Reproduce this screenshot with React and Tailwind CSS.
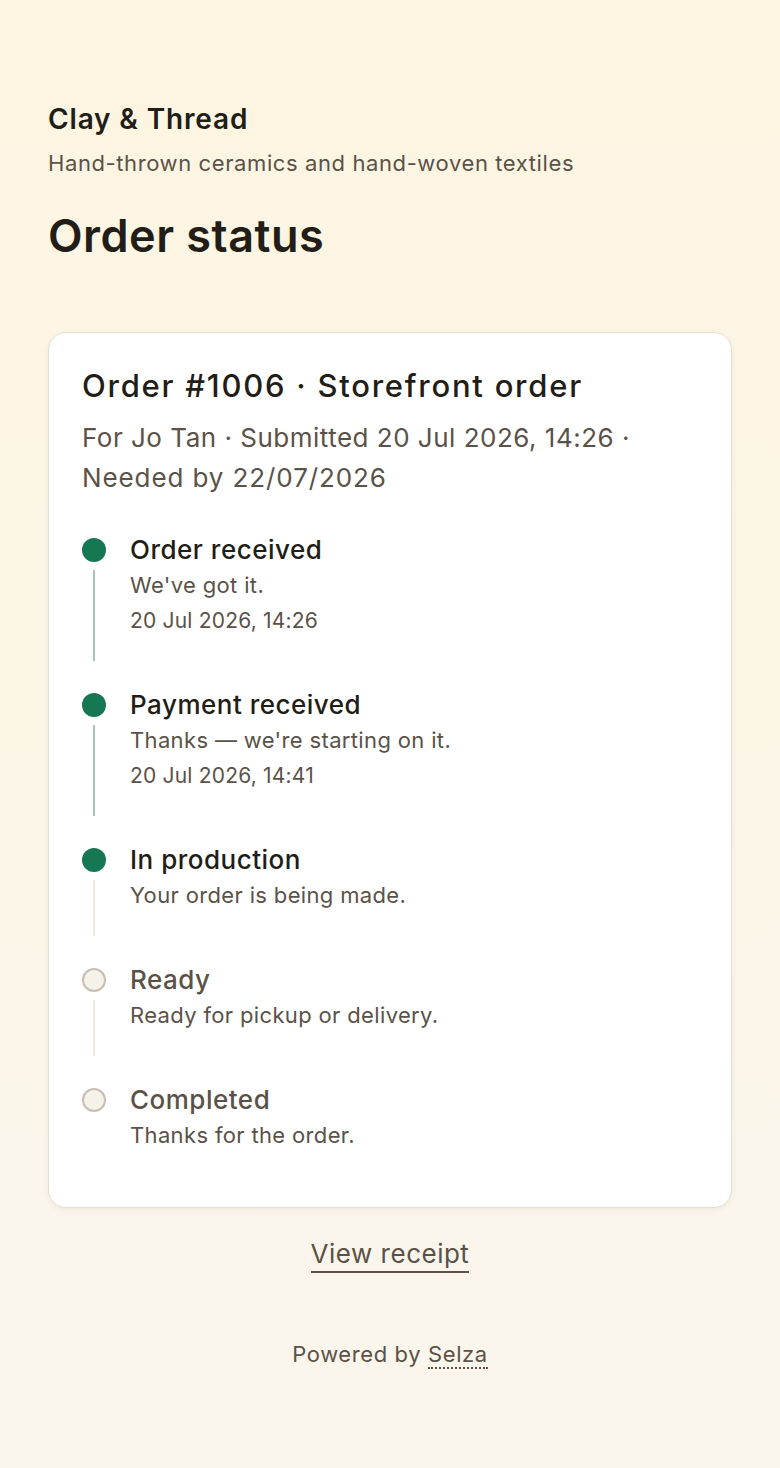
import React from "react";

const steps = [
  { title: "Order received", desc: "We've got it.", date: "20 Jul 2026, 14:26", done: true, lineDone: true },
  { title: "Payment received", desc: "Thanks — we're starting on it.", date: "20 Jul 2026, 14:41", done: true, lineDone: true },
  { title: "In production", desc: "Your order is being made.", done: true, lineDone: false },
  { title: "Ready", desc: "Ready for pickup or delivery.", done: false, lineDone: false },
  { title: "Completed", desc: "Thanks for the order.", done: false, last: true },
];

export default function App() {
  return (
    <div
      className="min-h-[1468px] w-full bg-gradient-to-b from-[#fdf5e1] to-[#faf6ed] text-[#221d16]"
      style={{ fontFamily: "Inter, 'Liberation Sans', sans-serif" }}
    >
      <div className="px-[48px] pt-[101px]">
        <div className="text-[28px] font-semibold leading-[36px] tracking-[0.85px]">Clay &amp; Thread</div>
        <div className="mt-[11px] text-[22px] leading-[30px] tracking-[0.6px] text-[#5a5248]">
          Hand-thrown ceramics and hand-woven textiles
        </div>
        <h1 className="mt-[32px] text-[45px] font-semibold leading-[52px] tracking-[0.5px]">Order status</h1>

        <div className="mt-[70px] rounded-[18px] border border-[#e6dfd2] bg-white px-[33px] pt-[33px] pb-[54px] shadow-[0_2px_6px_rgba(60,40,10,0.06)]">
          <div className="text-[31px] font-medium leading-[40px] tracking-[1.75px]">Order #1006 · Storefront order</div>
          <div className="mt-[12px] text-[26px] leading-[40px] tracking-[0.5px] text-[#5a5248]">
            For Jo Tan · Submitted 20 Jul 2026, 14:26 ·{" "}
            <span className="tracking-[0.9px]">Needed by 22/07/2026</span>
          </div>

          <div className="mt-[34px] flex flex-col gap-[26px]">
            {steps.map((s) => (
              <div key={s.title} className="flex">
                <div className="flex w-[24px] flex-col items-center">
                  {s.done ? (
                    <div className="mt-[6px] h-[24px] w-[24px] rounded-full bg-[#167753]" />
                  ) : (
                    <div className="mt-[6px] h-[24px] w-[24px] rounded-full border-2 border-[#c6beb1] bg-[#f6f2ea]" />
                  )}
                  {!s.last && (
                    <div
                      className={
                        "mt-[8px] w-[2px] flex-1 " + (s.lineDone ? "bg-[#a2c6b7]" : "bg-[#eee8dd]")
                      }
                    />
                  )}
                </div>
                <div className={"ml-[24px] " + (s.last ? "" : "pb-[23px]")}>
                  <div
                    className={
                      "text-[26px] font-medium leading-[36px] tracking-[0.5px] " +
                      (s.done ? "text-[#221d16]" : "text-[#5a5248]")
                    }
                  >
                    {s.title}
                  </div>
                  <div className="text-[22px] leading-[35px] tracking-[0.35px] text-[#5a5248]">{s.desc}</div>
                  {s.date && (
                    <div className="text-[21px] leading-[35px] tracking-[0.2px] text-[#5a5248]">{s.date}</div>
                  )}
                </div>
              </div>
            ))}
          </div>
        </div>

        <div className="mt-[29px] flex justify-center">
          <a className="border-b-2 border-[#5b5146] text-[26px] leading-[34px] tracking-[0.5px] text-[#5b5146]">
            View receipt
          </a>
        </div>

        <div className="mt-[66px] flex justify-center text-[22px] leading-[30px] tracking-[0.6px] text-[#5b5146]">
          <span>
            Powered by{" "}
            <span className="border-b-2 border-dotted border-[#5b5146]">Selza</span>
          </span>
        </div>
      </div>
    </div>
  );
}
